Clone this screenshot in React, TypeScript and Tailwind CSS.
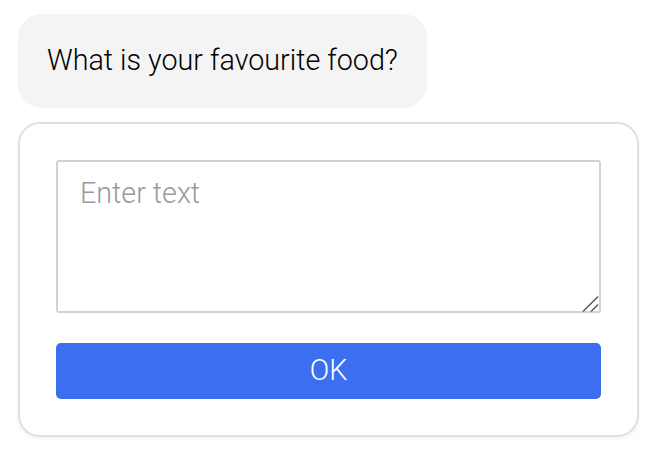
import React from "react";

export default function App() {
  return (
    <div
      className="w-[650px] h-[466px] bg-white pl-[18px] pr-[11px] pt-[14px]"
      style={{ fontFamily: "Roboto, 'Liberation Sans', sans-serif" }}
    >
      <div className="inline-flex h-[94px] items-center rounded-[24px] bg-[#f4f4f4] px-[29px] text-[28.7px] font-light text-black">
        What is your favourite food?
      </div>
      <div className="mt-[14px] rounded-[22px] border-2 border-[#e0e0e0] bg-white p-[36px] shadow-[0_2px_4px_rgba(0,0,0,0.06)]">
        <div className="relative">
          <textarea
            placeholder="Enter text"
            className="block h-[153px] w-full resize-none rounded-[3px] border-2 border-[#cfd3d6] px-[22px] pt-[14px] pb-[12px] text-[28.7px] leading-[1.2] font-light text-black placeholder:text-[#9a9a9a] outline-none"
          />
          <svg
            className="pointer-events-none absolute bottom-[1px] right-[2px]"
            width="17"
            height="17"
            viewBox="0 0 17 17"
          >
            <line x1="1" y1="16.5" x2="16" y2="1.5" stroke="#555" strokeWidth="1.4" />
            <line x1="9" y1="16.5" x2="16" y2="9.5" stroke="#555" strokeWidth="1.4" />
          </svg>
        </div>
        <button className="mt-[30px] flex h-[56px] w-full items-center justify-center rounded-[5px] bg-[#3c6ff0] text-[28.7px] font-light text-white">
          OK
        </button>
      </div>
    </div>
  );
}
